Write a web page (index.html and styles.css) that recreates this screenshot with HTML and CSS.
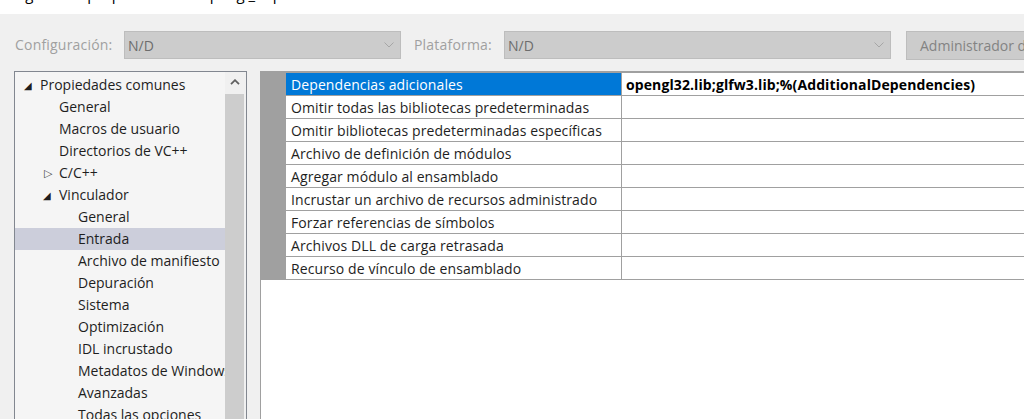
FILE: index.html
```html
<!DOCTYPE html>
<html lang="es">
<head>
<meta charset="utf-8">
<title>Páginas de propiedades de opengl_dependencies</title>
<link rel="stylesheet" href="styles.css">
</head>
<body>
<div class="window">
  <div class="titlebar"><span class="title">Páginas de propiedades de opengl_dependencies</span></div>

  <div class="toolbar">
    <span class="tb-label tb-label-config">Configuración:</span>
    <div class="combo combo-config">
      <span class="combo-text">N/D</span>
      <svg class="chev" width="10" height="6" viewBox="0 0 10 6"><path d="M0.5 0.5 L5 5 L9.5 0.5" fill="none" stroke="#a6a6a6" stroke-width="1"/></svg>
    </div>
    <span class="tb-label tb-label-plat">Plataforma:</span>
    <div class="combo combo-plat">
      <span class="combo-text">N/D</span>
      <svg class="chev" width="10" height="6" viewBox="0 0 10 6"><path d="M0.5 0.5 L5 5 L9.5 0.5" fill="none" stroke="#a6a6a6" stroke-width="1"/></svg>
    </div>
    <div class="btn">Administrador de configuración...</div>
  </div>

  <div class="main">
    <div class="tree">
      <ul class="tree-list">
        <li class="node l0"><span class="exp">◢</span>Propiedades comunes</li>
        <li class="node l1">General</li>
        <li class="node l1">Macros de usuario</li>
        <li class="node l1">Directorios de VC++</li>
        <li class="node l1"><span class="exp col">▷</span>C/C++</li>
        <li class="node l1"><span class="exp">◢</span>Vinculador</li>
        <li class="node l2">General</li>
        <li class="node l2 sel">Entrada</li>
        <li class="node l2">Archivo de manifiesto</li>
        <li class="node l2">Depuración</li>
        <li class="node l2">Sistema</li>
        <li class="node l2">Optimización</li>
        <li class="node l2">IDL incrustado</li>
        <li class="node l2">Metadatos de Windows</li>
        <li class="node l2">Avanzadas</li>
        <li class="node l2">Todas las opciones</li>
      </ul>
      <div class="scrollbar">
        <div class="sb-up">
          <svg width="10" height="6" viewBox="0 0 10 6"><path d="M1 5.2 L5 1.2 L9 5.2" fill="none" stroke="#606060" stroke-width="1.8"/></svg>
        </div>
        <div class="sb-thumb"></div>
      </div>
    </div>

    <div class="grid">
      <div class="gutter"></div>
      <div class="rows">
        <div class="row sel"><div class="name">Dependencias adicionales</div><div class="value">opengl32.lib;glfw3.lib;%(AdditionalDependencies)</div></div>
        <div class="row"><div class="name">Omitir todas las bibliotecas predeterminadas</div><div class="value"></div></div>
        <div class="row"><div class="name">Omitir bibliotecas predeterminadas específicas</div><div class="value"></div></div>
        <div class="row"><div class="name">Archivo de definición de módulos</div><div class="value"></div></div>
        <div class="row"><div class="name">Agregar módulo al ensamblado</div><div class="value"></div></div>
        <div class="row"><div class="name">Incrustar un archivo de recursos administrado</div><div class="value"></div></div>
        <div class="row"><div class="name">Forzar referencias de símbolos</div><div class="value"></div></div>
        <div class="row"><div class="name">Archivos DLL de carga retrasada</div><div class="value"></div></div>
        <div class="row"><div class="name">Recurso de vínculo de ensamblado</div><div class="value"></div></div>
      </div>
    </div>
  </div>
</div>
</body>
</html>
```

FILE: styles.css
```css
* { box-sizing: border-box; }

html, body {
  margin: 0;
  padding: 0;
  width: 1024px;
  height: 419px;
  overflow: hidden;
  background: #f0f0f0;
}

.window {
  font-family: "Open Sans", "Noto Sans", sans-serif;
  font-size: 14px;
  color: #000;
  width: 1024px;
  height: 419px;
  overflow: hidden;
  display: flex;
  flex-direction: column;
}

.titlebar {
  height: 14px;
  background: #fff;
  overflow: hidden;
  flex: none;
}
.title {
  display: block;
  margin-top: -17px;
  padding-left: 8px;
  font-size: 15px;
  line-height: 22px;
  white-space: nowrap;
}

.toolbar {
  flex: none;
  display: flex;
  align-items: center;
  height: 28px;
  margin-top: 17px;
  padding-left: 15px;
  white-space: nowrap;
}
.tb-label {
  flex: none;
  color: #a0a0a0;
  font-size: 14px;
  letter-spacing: 0.2px;
  line-height: 26px;
}
.tb-label-config { width: 109px; }
.tb-label-plat { width: 90px; margin-left: 13px; }

.combo {
  height: 28px;
  background: #cccccc;
  border: 1px solid #bdbdbd;
  display: flex;
  align-items: center;
  justify-content: space-between;
  padding: 0 6px 0 3px;
  flex: none;
}
.combo-config { width: 277px; }
.combo-plat { width: 387px; }
.combo-text { color: #6d6d6d; font-size: 14px; }
.chev { display: block; }

.btn {
  flex: none;
  margin-left: 15px;
  height: 29px;
  width: 220px;
  background: #cccccc;
  border: 1px solid #bdbdbd;
  color: #838383;
  padding-left: 13px;
  display: flex;
  align-items: center;
  overflow: hidden;
}

.main {
  flex: 1;
  display: flex;
  margin-top: 12px;
  padding-left: 14px;
  min-height: 0;
}

.tree {
  flex: none;
  width: 233px;
  border: 1px solid #828790;
  border-bottom: none;
  background: #f5f5f5;
  display: flex;
  overflow: hidden;
}
.tree-list {
  list-style: none;
  margin: 0;
  padding: 2px 0 0 0;
  width: 210px;
  flex: none;
  overflow: hidden;
}
.node {
  height: 22px;
  line-height: 22px;
  white-space: nowrap;
  overflow: hidden;
  position: relative;
  color: #1e1e1e;
}
.node.l0 { padding-left: 25px; }
.node.l1 { padding-left: 44px; }
.node.l2 { padding-left: 63px; }
.node.sel { background: #cccedb; }
.exp {
  display: inline-block;
  width: 16px;
  margin-left: -16px;
  font-size: 10px;
  color: #1e1e1e;
  vertical-align: top;
}
.exp.col { font-size: 11px; color: #444; padding-left: 1px; }

.scrollbar {
  flex: none;
  width: 21px;
  display: flex;
  flex-direction: column;
  background: #f0f0f0;
  padding-right: 2px;
}
.sb-up {
  height: 22px;
  display: flex;
  align-items: center;
  justify-content: center;
  flex: none;
}
.sb-up svg { display: block; margin-top: -2px; }
.sb-thumb {
  flex: 1;
  background: #cdcdcd;
}

.grid {
  flex: none;
  margin-left: 13px;
  width: 780px;
  background: #fff;
  border-top: 1px solid #a0a0a0;
  border-left: 1px solid #a0a0a0;
  display: flex;
  align-items: flex-start;
}
.gutter {
  flex: none;
  width: 25px;
  height: 208px;
  background: #a0a0a0;
}
.rows {
  flex: 1;
  border-top: 1px solid #a0a0a0;
}
.row {
  display: flex;
  height: 23px;
  border-bottom: 1px solid #a0a0a0;
}
.name {
  flex: none;
  width: 336px;
  height: 22px;
  border-right: 1px solid #a0a0a0;
  padding-left: 5px;
  line-height: 24px;
  white-space: nowrap;
  overflow: hidden;
  color: #1e1e1e;
  letter-spacing: 0.1px;
}
.row.sel .name {
  background: #0078d7;
  color: #fff;
}
.value {
  flex: 1;
  height: 22px;
  padding-left: 4px;
  line-height: 24px;
  font-weight: 700;
  white-space: nowrap;
  overflow: hidden;
  color: #000;
  letter-spacing: 0.1px;
}
```
